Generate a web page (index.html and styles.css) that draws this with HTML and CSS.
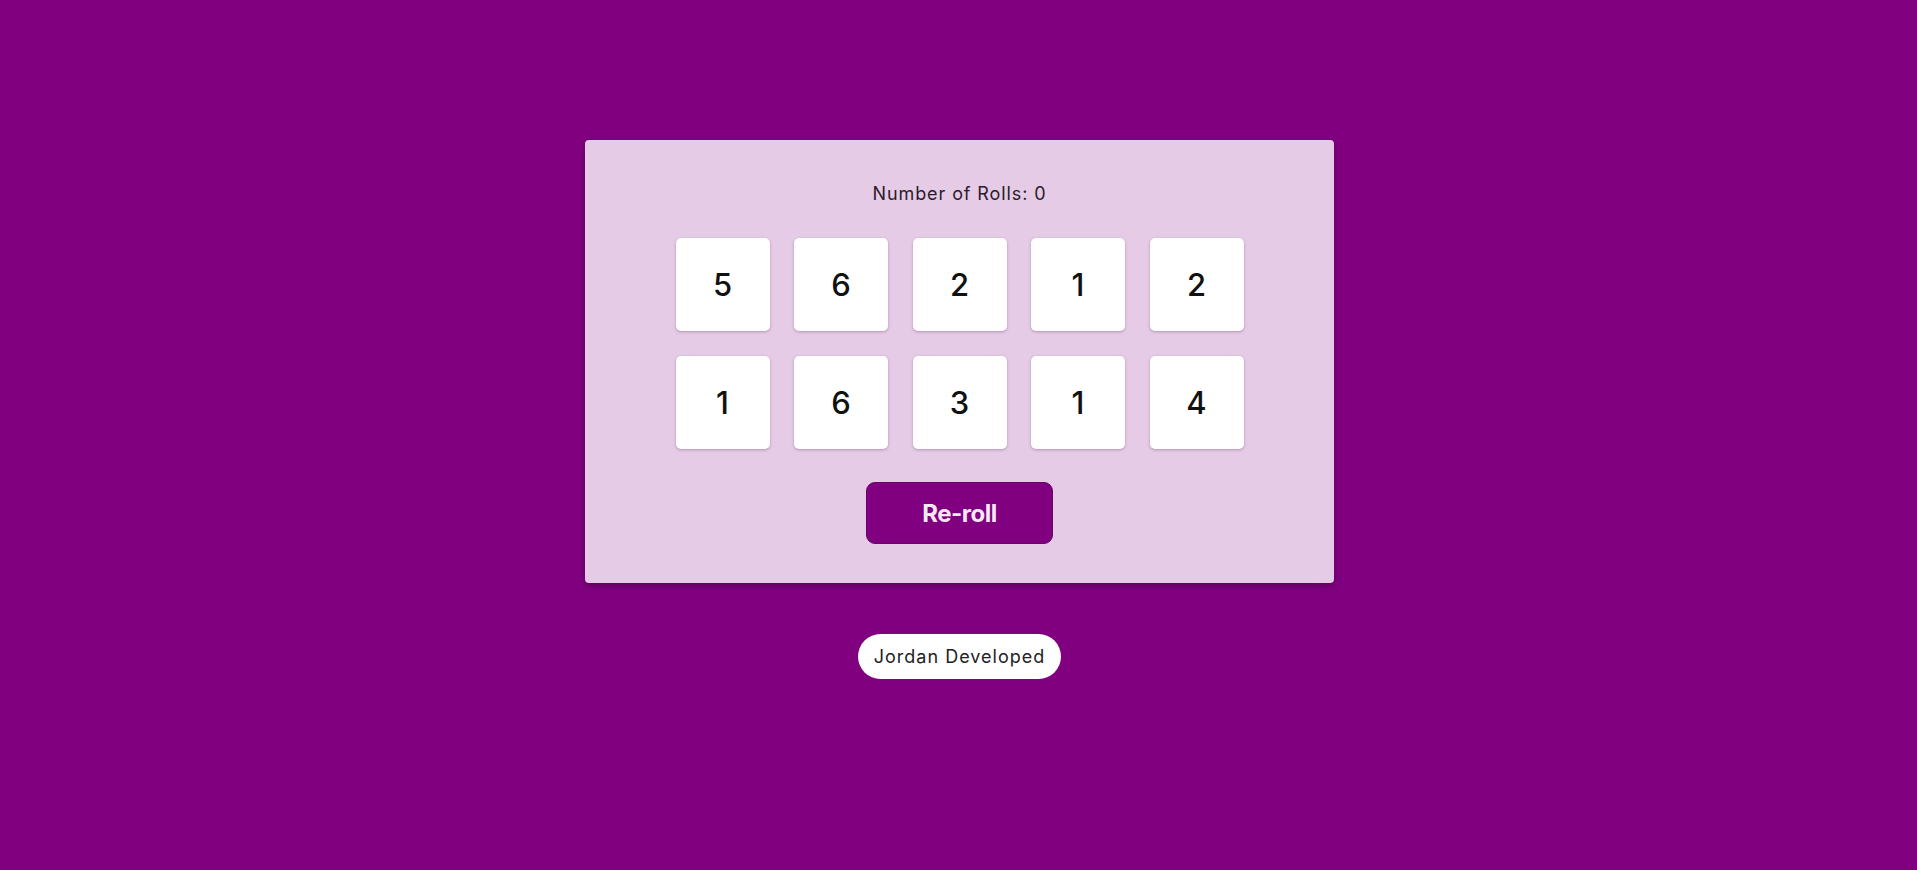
FILE: index.html
```html
<!DOCTYPE html>
<html lang="en">
<head>
<meta charset="utf-8">
<title>Tenzies</title>
<link rel="stylesheet" href="styles.css">
</head>
<body>
  <main class="board">
    <p class="rolls">Number of Rolls: 0</p>
    <div class="dice">
      <div class="die">5</div>
      <div class="die">6</div>
      <div class="die">2</div>
      <div class="die">1</div>
      <div class="die">2</div>
      <div class="die">1</div>
      <div class="die">6</div>
      <div class="die">3</div>
      <div class="die">1</div>
      <div class="die">4</div>
    </div>
    <button class="reroll">Re-roll</button>
  </main>
  <footer class="credit">Jordan Developed</footer>
</body>
</html>
```

FILE: styles.css
```css
html, body {
  margin: 0;
  padding: 0;
}

body {
  background: #800080;
  font-family: Inter, "Liberation Sans", sans-serif;
  min-height: 870px;
  box-sizing: border-box;
  padding-top: 140px;
  padding-left: 2px;
  display: flex;
  flex-direction: column;
  align-items: center;
}

.board {
  width: 749px;
  height: 443px;
  box-sizing: border-box;
  background: #e5cbe6;
  border-radius: 4px;
  box-shadow: 0 3px 6px rgba(0, 0, 0, 0.25);
  display: flex;
  flex-direction: column;
  align-items: center;
  padding-top: 43px;
}

.rolls {
  margin: 0;
  font-size: 18px;
  line-height: 22px;
  letter-spacing: 0.9px;
  color: #2b1b2b;
}

.dice {
  margin-top: 33px;
  display: grid;
  grid-template-columns: repeat(5, 94px);
  grid-auto-rows: 93px;
  column-gap: 24.5px;
  row-gap: 25px;
}

.die {
  background: #fff;
  border-radius: 5px;
  box-shadow: 0 1px 3px rgba(90, 40, 90, 0.35);
  display: flex;
  align-items: center;
  justify-content: center;
  font-size: 31px;
  font-weight: 500;
  color: #111;
}

.reroll {
  margin-top: 33px;
  width: 187px;
  height: 62px;
  border: 1px solid #6e006e;
  border-radius: 9px;
  background: #800080;
  color: #f5e8f5;
  font-family: Inter, "Liberation Sans", sans-serif;
  font-size: 24px;
  font-weight: 700;
  letter-spacing: -0.5px;
  cursor: pointer;
}

.credit {
  margin-top: 51px;
  height: 45px;
  box-sizing: border-box;
  padding: 0 16px;
  background: #fff;
  border-radius: 23px;
  display: flex;
  align-items: center;
  font-size: 18px;
  letter-spacing: 1px;
  color: #222;
}
```
